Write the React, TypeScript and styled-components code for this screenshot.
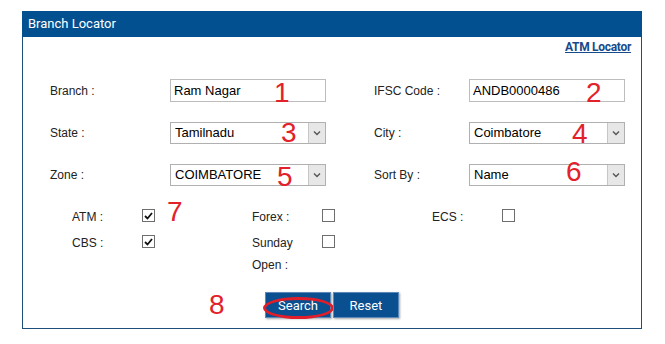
import React from 'react';
import styled, { createGlobalStyle } from 'styled-components';

const GlobalStyle = createGlobalStyle`
  body {
    margin: 0;
    background: #fff;
    font-family: 'Liberation Sans', Arial, sans-serif;
  }
`;

const Page = styled.div`
  padding: 11px 0 0 22px;
  width: 665px;
  height: 344px;
  box-sizing: border-box;
`;

const Panel = styled.div`
  position: relative;
  width: 620px;
  height: 318px;
  box-sizing: border-box;
  border: 1px solid #1d4e7c;
  border-top: none;
`;

const Header = styled.div`
  height: 26px;
  margin: 0 -1px;
  background: #02508f;
  color: #fff;
  font-family: Roboto, 'Liberation Sans', sans-serif;
  font-size: 13px;
  line-height: 26px;
  padding-left: 6px;
`;

const LinkRow = styled.div`
  display: flex;
  justify-content: flex-end;
  padding: 3px 10px 0 0;
  height: 16px;
`;

const Link = styled.a`
  font-family: Roboto, 'Liberation Sans', sans-serif;
  font-weight: 700;
  font-size: 12px;
  letter-spacing: -0.3px;
  color: #174a8a;
  text-decoration: underline;
`;

const FormGrid = styled.div`
  display: grid;
  grid-template-columns: 120px 156px 48px 95px 156px;
  grid-auto-rows: 23px;
  row-gap: 19px;
  padding: 23px 0 0 27px;
  align-items: center;
`;

const Label = styled.div`
  font-size: 12px;
  color: #222;
`;

const TextBox = styled.div`
  height: 23px;
  box-sizing: border-box;
  border: 1px solid #bdbdbd;
  font-size: 13px;
  color: #000;
  padding-left: 3px;
  display: flex;
  align-items: center;
`;

const SelectBox = styled.div`
  height: 22px;
  box-sizing: border-box;
  border: 1px solid #b0b0b0;
  font-size: 13px;
  color: #000;
  display: flex;
  align-items: stretch;
`;

const SelectText = styled.span`
  flex: 1;
  display: flex;
  align-items: center;
  padding-left: 4px;
`;

const Arrow = styled.span`
  width: 16px;
  background: #e7e7e7;
  border-left: 1px solid #c6c6c6;
  display: flex;
  align-items: center;
  justify-content: center;
`;

const Spacer = styled.div``;

const ChecksGrid = styled.div`
  display: grid;
  grid-template-columns: repeat(3, 70px 110px);
  grid-template-rows: 26px 45px;
  padding: 19px 0 0 49px;
  align-items: start;
`;

const CheckLabel = styled.div`
  font-size: 12px;
  color: #222;
  line-height: 22px;
  padding-top: 1px;
`;

const Box = styled.div`
  width: 13px;
  height: 13px;
  box-sizing: border-box;
  border: 1px solid #6e6e6e;
  background: #fff;
  margin-top: 4px;
  display: flex;
  align-items: center;
  justify-content: center;
`;

const ButtonRow = styled.div`
  display: flex;
  gap: 2px;
  padding: 16px 0 0 242px;
`;

const Button = styled.button`
  width: 66px;
  height: 26px;
  background: #0a4f8f;
  border: 1px solid #5d88b8;
  box-shadow: 1px 1px 2px rgba(0, 0, 0, 0.35);
  color: #fff;
  font-family: Roboto, 'Liberation Sans', sans-serif;
  font-size: 13px;
  padding: 0;
  position: relative;
`;

const Ring = styled.span`
  position: absolute;
  left: -3px;
  top: 4px;
  width: 71px;
  height: 22px;
  border: 3px solid #e21d2a;
  border-radius: 50%;
  box-sizing: border-box;
`;

const Mark = styled.span<{ $x: number; $y: number }>`
  position: absolute;
  left: ${(p) => p.$x}px;
  top: ${(p) => p.$y}px;
  color: #e3212b;
  font-family: 'Liberation Sans', Arial, sans-serif;
  font-size: 28px;
  line-height: 1;
`;

const Chevron = () => (
  <svg width='8' height='6' viewBox='0 0 8 6'>
    <path d='M1 1.5 L4 4.5 L7 1.5' fill='none' stroke='#555' strokeWidth='1.4' />
  </svg>
);

const Tick = () => (
  <svg width='9' height='8' viewBox='0 0 9 8'>
    <path d='M1 4 L3.5 6.5 L8 1' fill='none' stroke='#111' strokeWidth='1.8' />
  </svg>
);

const Select = ({ value }: { value: string }) => (
  <SelectBox>
    <SelectText>{value}</SelectText>
    <Arrow>
      <Chevron />
    </Arrow>
  </SelectBox>
);

const Check = ({ checked }: { checked?: boolean }) => <Box>{checked && <Tick />}</Box>;

// annotation numbers, placed over the form
const marks: [string, number, number][] = [
  ['1', 251, 68],
  ['2', 563, 68],
  ['3', 258, 108],
  ['4', 549, 109],
  ['5', 254, 152],
  ['6', 543, 147],
  ['7', 144, 187],
  ['8', 186, 280],
];

export default function App() {
  return (
    <Page>
      <GlobalStyle />
      <Panel>
        <Header>Branch Locator</Header>
        <LinkRow>
          <Link href='#'>ATM Locator</Link>
        </LinkRow>
        <FormGrid>
          <Label>Branch :</Label>
          <TextBox>Ram Nagar</TextBox>
          <Spacer />
          <Label>IFSC Code :</Label>
          <TextBox>ANDB0000486</TextBox>

          <Label>State :</Label>
          <Select value='Tamilnadu' />
          <Spacer />
          <Label>City :</Label>
          <Select value='Coimbatore' />

          <Label>Zone :</Label>
          <Select value='COIMBATORE' />
          <Spacer />
          <Label>Sort By :</Label>
          <Select value='Name' />
        </FormGrid>
        <ChecksGrid>
          <CheckLabel>ATM :</CheckLabel>
          <Check checked />
          <CheckLabel>Forex :</CheckLabel>
          <Check />
          <CheckLabel>ECS :</CheckLabel>
          <Check />
          <CheckLabel>CBS :</CheckLabel>
          <Check checked />
          <CheckLabel>
            Sunday
            <br />
            Open :
          </CheckLabel>
          <Check />
        </ChecksGrid>
        <ButtonRow>
          <Button>
            Search
            <Ring />
          </Button>
          <Button>Reset</Button>
        </ButtonRow>
        {marks.map(([n, x, y]) => (
          <Mark key={n} $x={x} $y={y}>
            {n}
          </Mark>
        ))}
      </Panel>
    </Page>
  );
}
